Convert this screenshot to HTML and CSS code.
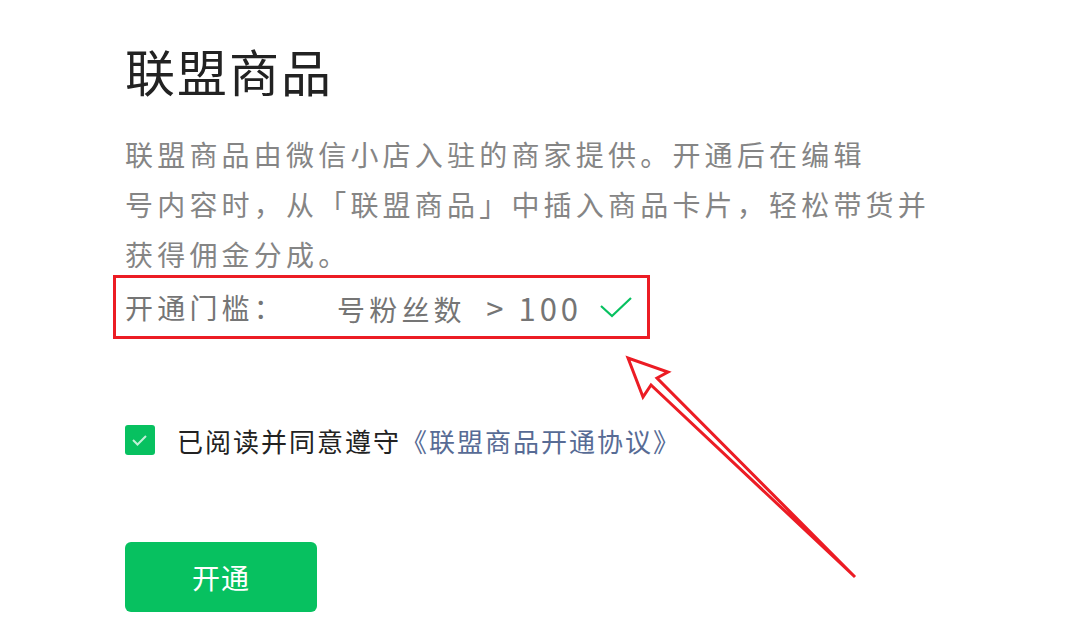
FILE: index.html
```html
<!DOCTYPE html>
<html>
<head>
  <meta charset="UTF-8">
  <title>联盟商品</title>
  <link rel="stylesheet" href="styles.css">
</head>
<body>
  <div class="page">
    <h1 class="title">联盟商品</h1>
    <p class="intro">联盟商品由微信小店入驻的商家提供。开通后在编辑<br>号内容时，从「联盟商品」中插入商品卡片，轻松带货并<br>获得佣金分成。</p>

    <div class="threshold">
      <span class="threshold-label">开通门槛：</span>
      <span class="threshold-gap"></span>
      <span class="threshold-value">号粉丝数 <span class="threshold-num">&gt; 100</span></span>
      <svg class="threshold-ok" width="36" height="26" viewBox="0 0 36 26">
        <polyline points="3,12 14,22 33,4" fill="none" stroke="#07c160" stroke-width="2.2"/>
      </svg>
    </div>

    <label class="agree">
      <span class="agree-box">
        <svg width="30" height="30" viewBox="0 0 30 30">
          <polyline points="8,15 12.5,19.5 21,11" fill="none" stroke="rgba(255,255,255,0.75)" stroke-width="2"/>
        </svg>
      </span>
      <span class="agree-text">已阅读并同意遵守<a class="agree-link">《联盟商品开通协议》</a></span>
    </label>

    <button class="open-btn">开通</button>
  </div>

  <svg class="arrow" width="1080" height="639" viewBox="0 0 1080 639">
    <path d="M628,358 L643,397 L651,385 L855,577 L657,378 L668,372 Z" fill="none" stroke="#ec1c24" stroke-width="3" stroke-linejoin="miter"/>
  </svg>
</body>
</html>
```

FILE: styles.css
```css
body {
  margin: 0;
  background: #fff;
  font-family: "Noto Sans CJK SC", "Liberation Sans", sans-serif;
}

.page {
  position: relative;
  width: 1080px;
  height: 639px;
  padding: 35px 0 0 125px;
  box-sizing: border-box;
  overflow: hidden;
}

.title {
  margin: 0;
  font-size: 50px;
  font-weight: normal;
  line-height: 70px;
  letter-spacing: 2px;
  color: #222;
}

.intro {
  margin: 24px 0 0;
  font-size: 28px;
  line-height: 50px;
  letter-spacing: 4.2px;
  color: #858585;
}

.threshold {
  display: flex;
  align-items: center;
  width: 537px;
  height: 64px;
  box-sizing: border-box;
  margin: -4px 0 0 -12px;
  padding-left: 9px;
  border: 3.5px solid #ec1c24;
  font-size: 28px;
  letter-spacing: 4.2px;
  color: #757575;
}

.threshold-gap {
  width: 51px;
}

.threshold-num {
  font-size: 31px;
  letter-spacing: 4px;
  padding-left: 10px;
}

.threshold-ok {
  margin-left: 16px;
}

.agree {
  display: flex;
  align-items: center;
  gap: 22px;
  height: 40px;
  margin-top: 81px;
}

.agree-box {
  display: block;
  width: 30px;
  height: 30px;
  border-radius: 3px;
  background: #07c160;
}

.agree-box svg {
  display: block;
}

.agree-text {
  font-size: 26px;
  letter-spacing: 2px;
  color: #222;
}

.agree-link {
  color: #576b95;
}

.open-btn {
  display: block;
  width: 192px;
  height: 70px;
  margin-top: 82px;
  border: none;
  border-radius: 6px;
  background: #07c160;
  color: #fff;
  font-family: inherit;
  font-size: 28px;
  letter-spacing: 1px;
}

.arrow {
  position: absolute;
  left: 0;
  top: 0;
  pointer-events: none;
}
```
